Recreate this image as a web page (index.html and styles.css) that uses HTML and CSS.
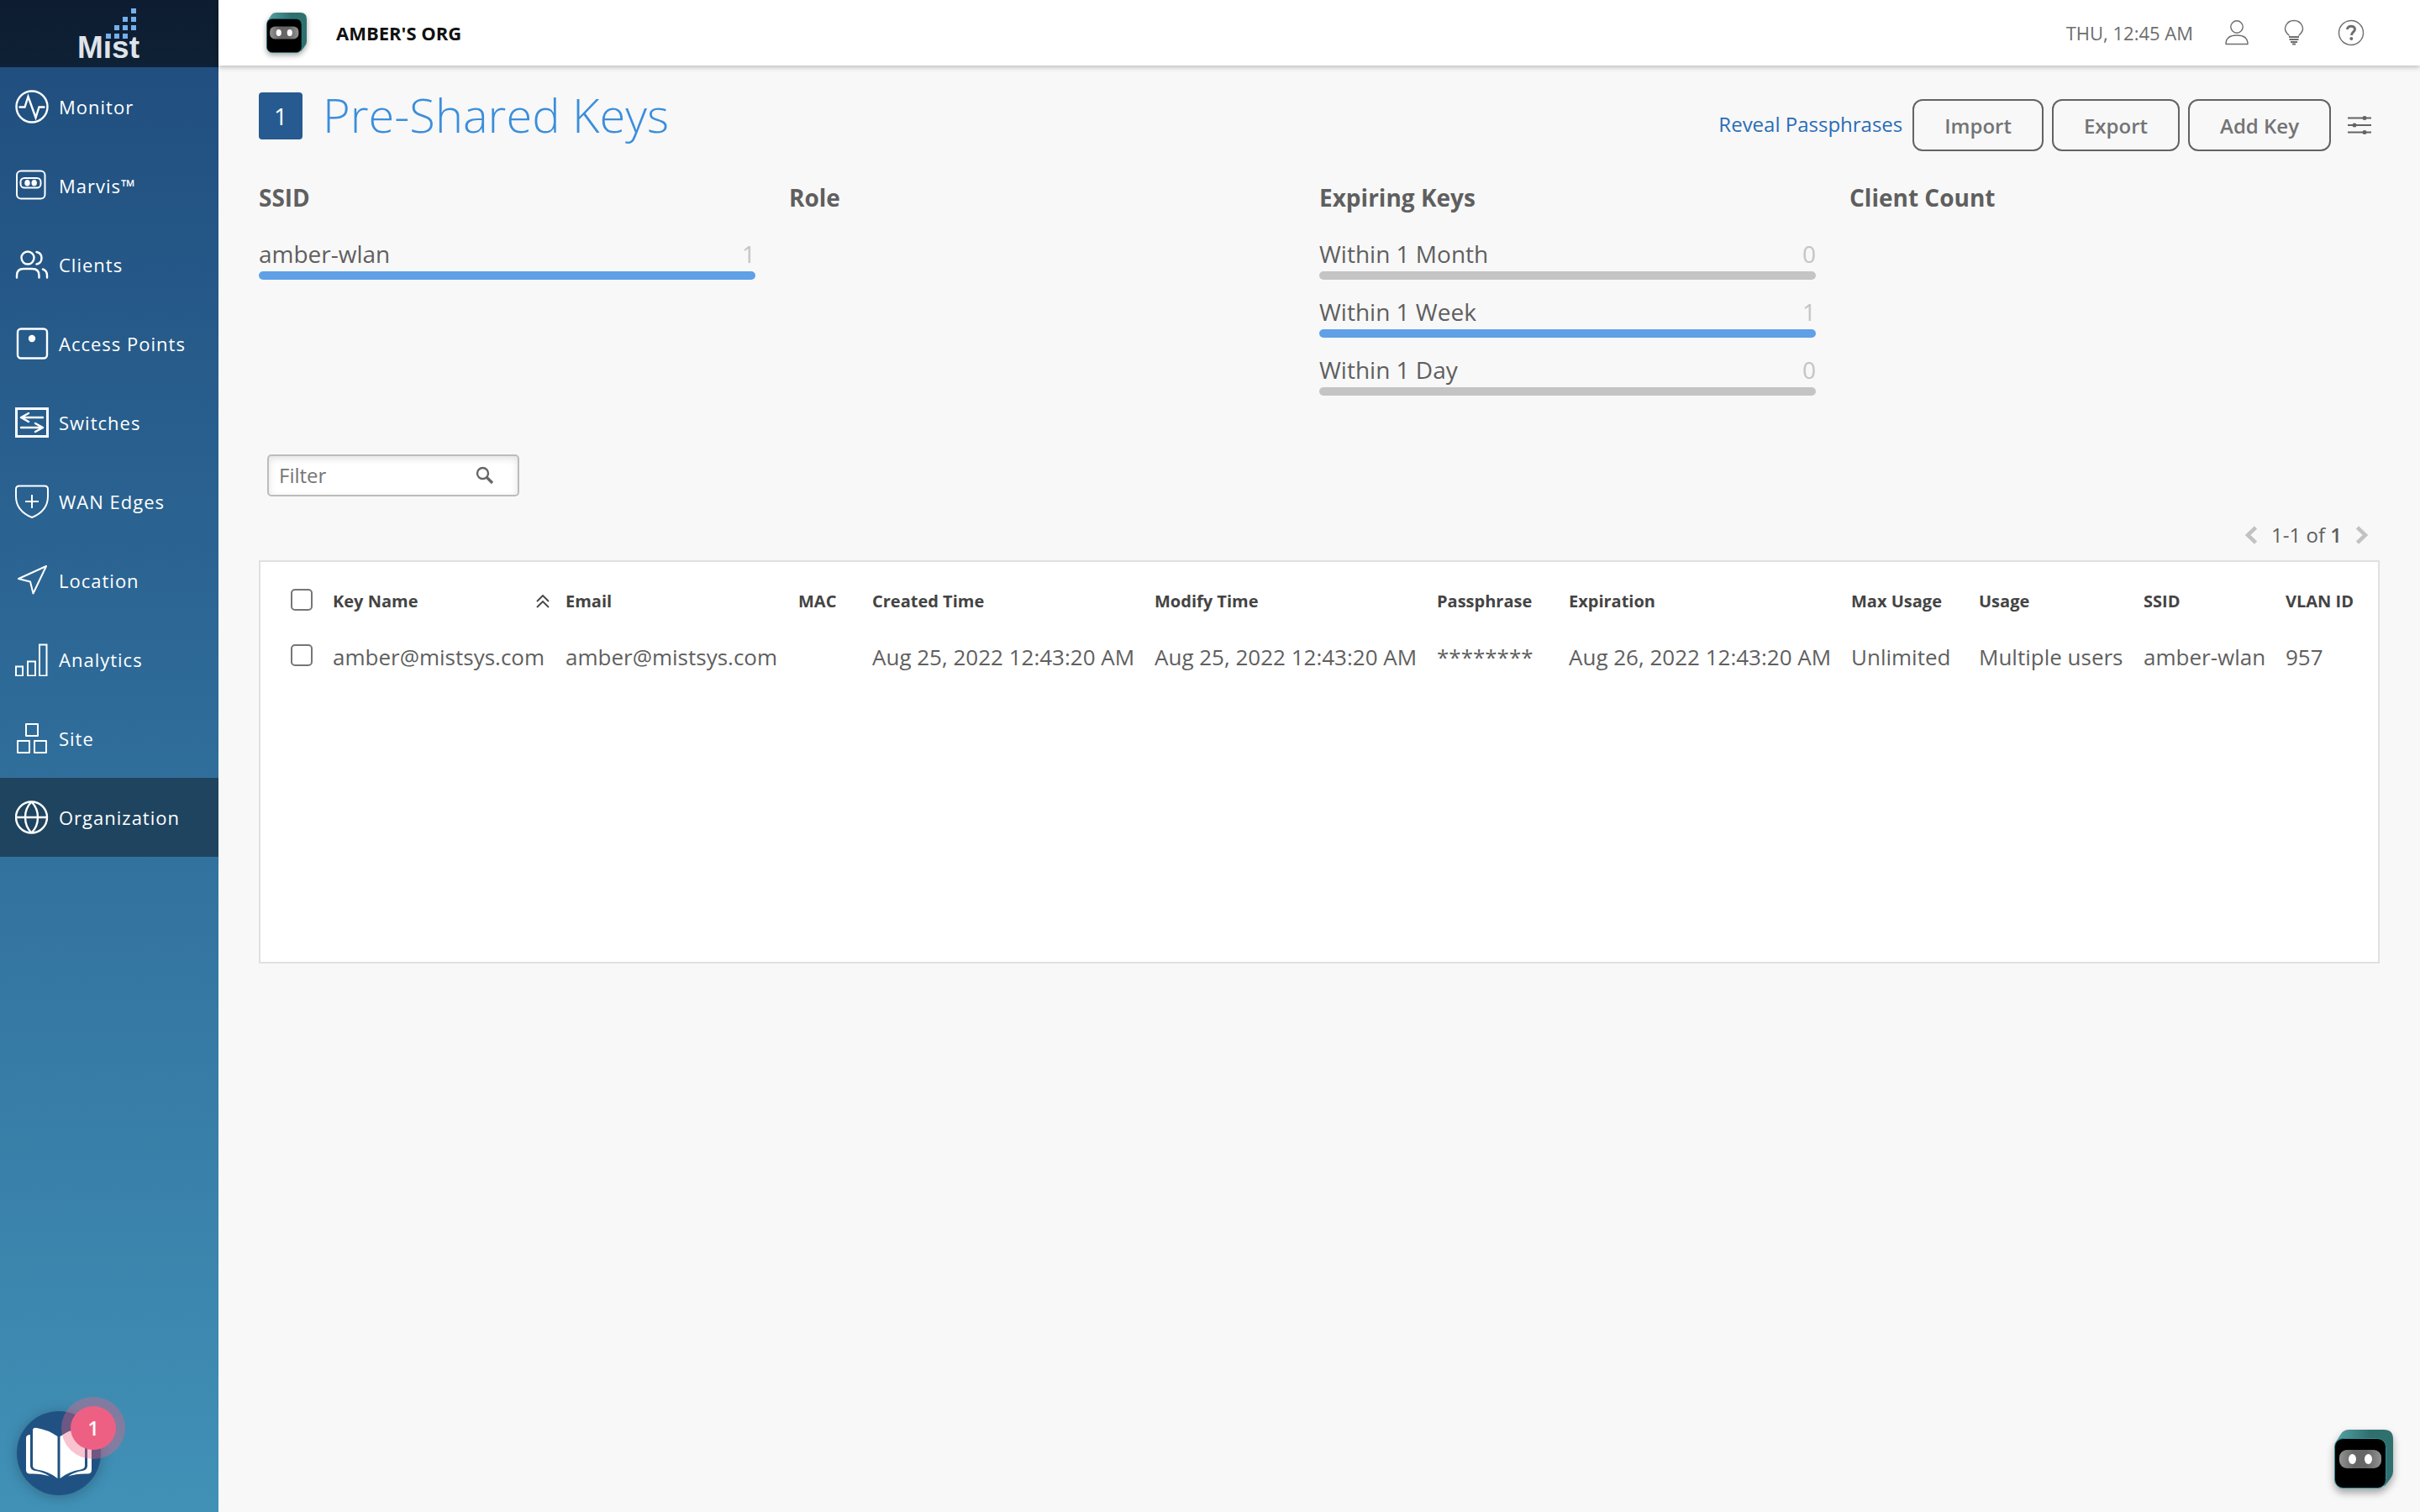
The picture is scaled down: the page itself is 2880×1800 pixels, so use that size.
FILE: index.html
```html
<!DOCTYPE html>
<html lang="en">
<head>
<meta charset="utf-8">
<meta name="viewport" content="width=device-width, initial-scale=1">
<title>Pre-Shared Keys</title>
<link rel="stylesheet" href="styles.css">
</head>
<body>
<svg class="defs" width="0" height="0" aria-hidden="true">
  <defs>
    <linearGradient id="visor"><stop offset="0" stop-color="#929292"/><stop offset=".35" stop-color="#666"/><stop offset=".65" stop-color="#666"/><stop offset="1" stop-color="#929292"/></linearGradient>
    <linearGradient id="cube"><stop offset="0" stop-color="#55a3a8"/><stop offset=".6" stop-color="#2f706e"/><stop offset="1" stop-color="#2f706e"/></linearGradient>
    <symbol id="robot" viewBox="0 0 70 70">
      <path d="M1 16 8 5Q11 0 18 0H59Q70 0 70 11V50Q70 54 67 58L60 67Z" fill="url(#cube)"/>
      <rect x=".5" y="10.500" width="61" height="59" rx="10" fill="#000" stroke="#2f8f99"/>
      <rect x="6" y="24" width="50" height="22" rx="9" fill="url(#visor)"/>
      <ellipse cx="21.500" cy="35" rx="4.500" ry="6" fill="#fff"/>
      <ellipse cx="40.500" cy="35" rx="4.500" ry="6" fill="#fff"/>
    </symbol>
  </defs>
</svg>
<div class="app">
  <aside class="sidebar">
    <a class="logo" href="#" aria-label="Mist">
      <svg width="88" height="80" viewBox="0 0 88 80">
        <text class="logo-text" x="6" y="69">Mist</text>
        <path d="M39 39h10v9h-10z" fill="#0e1f33"/>
        <path d="M70 10h6v6h-6zM60 20h6v6h-6zM70 20h6v6h-6zM50 30h6v6h-6zM60 30h6v6h-6zM70 30h6v6h-6zM40 40h6v6h-6zM50 40h6v6h-6zM60 40h6v6h-6z" fill="#74b0ee"/>
      </svg>
    </a>
    <nav class="nav">
      <a href="#"><svg viewBox="0 0 40 40"><circle cx="20" cy="20" r="18.500"/><path d="M5.500 20.500h6L15.500 8 24.500 33 28.500 20.500h6" stroke-linecap="round"/></svg>Monitor</a>
      <a href="#"><svg viewBox="0 0 40 40"><rect x="2" y="2.500" width="33.500" height="33" rx="5" stroke-width="2"/><rect x="6.500" y="11" width="24" height="11.500" rx="4.500" stroke-width="2"/><ellipse class="solid" cx="14.500" cy="16.700" rx="3.200" ry="3.800"/><ellipse class="solid" cx="22.700" cy="16.700" rx="3.200" ry="3.800"/></svg>Marvis™</a>
      <a href="#"><svg viewBox="0 0 40 40" stroke-linecap="round"><circle cx="15" cy="12" r="7.500"/><path d="M25.500 5c8 1.500 8 13 0 14.500M2 35.500V33c0-5 3-8 8-8h10.500c5 0 8 3 8 8v2.500M33 25.500c3 1 5 4 5 7.500v2.500"/></svg>Clients</a>
      <a href="#"><svg viewBox="0 0 40 40"><rect x="3" y="2.500" width="35" height="35" rx="4"/><circle class="solid" cx="20" cy="14" r="4.200"/></svg>Access Points</a>
      <a href="#"><svg viewBox="0 0 40 40"><path d="M1.500 3.500h37v33h-37z" stroke-width="3"/><path d="M33 14H7M16 9l-9 5 9 5M7 26h26M24 21l9 5-9 5" stroke-linecap="round" stroke-linejoin="round"/></svg>Switches</a>
      <a href="#"><svg viewBox="0 0 40 40"><path d="M5 1.500h30q4 0 4 4V14c0 12-8 20.500-19 25C9 34.500 1 26 1 14V5.500q0-4 4-4ZM20 12v16M12 20h16" stroke-width="2"/></svg>WAN Edges</a>
      <a href="#"><svg viewBox="0 0 40 40"><path d="M37 3 4 18l14 3.500 3.500 14z" stroke-linejoin="round" stroke-width="2"/></svg>Location</a>
      <a href="#"><svg viewBox="0 0 40 40"><path d="M1 28.500h8v11H1zM15 22.500h9v17h-9zM29 2.500h8.500v37H29z" stroke-width="2"/></svg>Analytics</a>
      <a href="#"><svg viewBox="0 0 40 40"><path d="M13 3h14v14H13zM3 23h14v14H3zM23 23h14v14H23z" stroke-width="2" stroke-linejoin="round"/></svg>Site</a>
      <a class="active" href="#"><svg viewBox="0 0 40 40"><circle cx="19.500" cy="20" r="18.500"/><path d="M1 20h37M19.500 1.500c-10 10-10 27 0 37M19.500 1.500c10 10 10 27 0 37"/></svg>Organization</a>
    </nav>
  </aside>
  <div class="content">
    <header class="topbar">
      <svg class="org-icon"><use href="#robot"/></svg>
      <span class="org-name">AMBER'S ORG</span>
      <time class="clock">THU, 12:45 AM</time>
      <button class="icon-btn" aria-label="Account"><svg viewBox="0 0 32 32"><circle cx="16" cy="9" r="7.200"/><path d="M3 29.500c0-7 5-10.500 13-10.500s13 3.500 13 10.500z" stroke-linejoin="round"/></svg></button>
      <button class="icon-btn" aria-label="Tips"><svg viewBox="0 0 32 32"><path d="M10.500 19.500c-10-8-3-18 5.500-18s15.500 10 5.500 18"/><path d="M10 21h12M10.500 24h11M12 27h8M14 29.500h4" stroke-width="1.800"/></svg></button>
      <button class="icon-btn" aria-label="Help"><svg viewBox="0 0 32 32"><circle cx="16" cy="16" r="14.500"/><path d="M11.500 12c0-5 9-5.200 9-.2 0 3.500-4 3.200-4 7.200" stroke-width="3"/><circle cx="16.300" cy="23" r="2" fill="#6e6e6e" stroke="none"/></svg></button>
    </header>
    <main class="main">
      <div class="title-row">
        <span class="count">1</span>
        <h1>Pre-Shared Keys</h1>
        <div class="actions">
          <a href="#">Reveal Passphrases</a>
          <button class="btn">Import</button>
          <button class="btn">Export</button>
          <button class="btn">Add Key</button>
          <button class="settings" aria-label="Table settings"><svg width="28" height="24" viewBox="0 0 28 24"><path d="M0 3.500h28M0 12h28M0 20.500h28" stroke="#636466" stroke-width="2"/><g fill="#636466"><circle cx="20" cy="3.500" r="2.500"/><circle cx="8" cy="12" r="2.500"/><circle cx="20" cy="20.500" r="2.500"/></g></svg></button>
        </div>
      </div>
      <section class="stats">
        <div><h2>SSID</h2>
          <div class="stat on"><span>amber-wlan</span><span class="num">1</span></div>
        </div>
        <div><h2>Role</h2></div>
        <div><h2>Expiring Keys</h2>
          <div class="stat"><span>Within 1 Month</span><span class="num">0</span></div>
          <div class="stat on"><span>Within 1 Week</span><span class="num">1</span></div>
          <div class="stat"><span>Within 1 Day</span><span class="num">0</span></div>
        </div>
        <div><h2>Client Count</h2></div>
      </section>
      <label class="filter">
        <input type="text" placeholder="Filter" aria-label="Filter">
        <svg width="22" height="22" viewBox="0 0 22 22" fill="none" stroke="#666"><circle cx="8.500" cy="8.500" r="6.500" stroke-width="2.400"/><path d="m13 13 7 7" stroke-width="3.200"/></svg>
      </label>
      <div class="pager">
        <button aria-label="Previous page"><svg width="14" height="22" viewBox="0 0 14 22"><path d="M12.500 2 3 11l9.500 9"/></svg></button>
        <span>1-1 of <b>1</b></span>
        <button aria-label="Next page"><svg width="14" height="22" viewBox="0 0 14 22"><path d="M1.500 2 11 11l-9.500 9"/></svg></button>
      </div>
      <div class="panel">
        <table>
          <colgroup><col class="c-check"><col class="c-name"><col class="c-name"><col class="c-mac"><col class="c-time"><col class="c-time"><col class="c-pass"><col class="c-time"><col class="c-max"><col class="c-usage"><col class="c-ssid"><col></colgroup>
          <thead><tr>
            <th><input type="checkbox" aria-label="Select all keys"></th>
            <th><div class="sorted">Key Name<svg width="16" height="16" viewBox="0 0 16 16" fill="none" stroke="#444" stroke-width="1.800"><path d="m1 8 7-7 7 7M1 15l7-7 7 7"/></svg></div></th>
            <th>Email</th><th>MAC</th><th>Created Time</th><th>Modify Time</th><th>Passphrase</th><th>Expiration</th><th>Max Usage</th><th>Usage</th><th>SSID</th><th>VLAN ID</th>
          </tr></thead>
          <tbody><tr>
            <td><input type="checkbox" aria-label="Select amber@mistsys.com"></td>
            <td>amber@mistsys.com</td><td>amber@mistsys.com</td><td></td><td>Aug 25, 2022 12:43:20 AM</td><td>Aug 25, 2022 12:43:20 AM</td><td>********</td><td>Aug 26, 2022 12:43:20 AM</td><td>Unlimited</td><td>Multiple users</td><td>amber-wlan</td><td>957</td>
          </tr></tbody>
        </table>
      </div>
    </main>
  </div>
</div>
<button class="guide" aria-label="Guides">
  <svg width="78" height="62" viewBox="0 0 78 62" fill="#fff"><path d="M8 4Q8 0 13 1 26 3 37.500 11V61Q28 53 13 50.500 8 49.500 8 46ZM70 4Q70 0 65 1 52 3 40.500 11V61Q50 53 65 50.500 70 49.500 70 46Z"/><path d="M5 9Q0 9 0 13V51Q0 55.500 5 55.500 18 55 28 58.500 20 53 11 52 5 51 5 46ZM73 9Q78 9 78 13V51Q78 55.500 73 55.500 60 55 50 58.500 58 53 67 52 73 51 73 46Z"/></svg>
  <span class="badge">1</span>
</button>
<button class="assistant" aria-label="Assistant"><svg><use href="#robot"/></svg></button>
</body>
</html>
```

FILE: styles.css
```css
* { box-sizing: border-box; }
body {
  margin: 0;
  background: #f8f8f8;
  color: #5f5f5f;
  font: 26px/36px "Open Sans", "Noto Sans", sans-serif;
}
a { text-decoration: none; color: inherit; }
button { font: inherit; color: inherit; background: none; border: 0; padding: 0; cursor: pointer; }
svg { display: block; flex: none; }
.defs { position: absolute; }

.app { display: flex; min-height: 100vh; }

.sidebar {
  flex: none;
  width: 260px;
  background: linear-gradient(#1f4c7d, #2c6694 40%, #4191b7);
}
.logo {
  display: flex;
  justify-content: center;
  height: 80px;
  background: linear-gradient(#0e1c31, #0e2135);
}
.logo-text { font: bold 37px "Liberation Sans", sans-serif; fill: #dfe4ea; }
.nav { display: flex; flex-direction: column; }
.nav a {
  display: flex;
  align-items: center;
  gap: 12px;
  height: 94px;
  padding-left: 18px;
  color: #fff;
  font-size: 22px;
  font-weight: 500;
  letter-spacing: 1px;
}
.nav svg { width: 40px; height: 40px; fill: none; stroke: #fff; stroke-width: 2.4; }
.nav .solid { fill: #fff; stroke: none; }
.nav .active { background: #1f445f; }

.content { flex: 1; min-width: 0; }
.topbar {
  display: flex;
  align-items: center;
  height: 78px;
  padding: 0 66px 0 57px;
  background: #fff;
  box-shadow: 0 2px 6px rgba(0, 0, 0, .25);
  font-size: 22px;
}
.org-icon { width: 48px; height: 48px; filter: drop-shadow(0 3px 3px rgba(0, 0, 0, .35)); }
.org-name { margin-left: 35px; color: #111; font-weight: 700; }
.clock { margin-left: auto; margin-right: 36px; color: #6e6e6e; }
.icon-btn + .icon-btn { margin-left: 36px; }
.icon-btn svg { width: 32px; height: 32px; fill: none; stroke: #6e6e6e; stroke-width: 1.4; }

.main { padding: 32px 48px 48px; }
.title-row { display: flex; align-items: center; height: 78px; }
.title-row .count {
  width: 52px;
  height: 56px;
  margin-bottom: 22px;
  border-radius: 4px;
  background: #265a90;
  color: #fff;
  font-size: 28px;
  line-height: 56px;
  text-align: center;
}
h1 { margin: 0 0 26px 24px; color: #3b8edc; font-size: 56px; line-height: 56px; font-weight: 300; }
.actions { display: flex; align-items: center; gap: 10px; margin-left: auto; color: #737476; font-size: 24px; }
.actions a { color: #2a6db6; margin-right: 2px; padding-bottom: 2px; }
.btn { height: 62px; padding: 2px 36px 0; border: 2px solid #636363; border-radius: 12px; font-weight: 600; }
.settings { margin: 0 10px; }

.stats { display: grid; grid-template-columns: repeat(4, 1fr); min-height: 353px; padding-top: 29px; }
.stats > div { padding-right: 40px; }
h2 { margin: 0 0 31px; font-size: 28px; line-height: 36px; font-weight: 700; }
.stat { display: flex; justify-content: space-between; flex-wrap: wrap; font-size: 28px; line-height: 36px; margin-bottom: 20px; }
.stat::after { content: ""; width: 100%; height: 10px; margin-top: 3px; border-radius: 5px; background: #c4c4c4; }
.stat.on::after { background: #5fa0e6; }
.stat .num { color: #c4c4c4; }

.filter {
  display: flex;
  align-items: center;
  width: 300px;
  height: 50px;
  margin-left: 10px;
  padding: 0 28px 0 12px;
  border: 2px solid #bcbcbc;
  border-radius: 5px;
  background: #fff;
  box-shadow: inset 0 3px 8px rgba(0, 0, 0, .12);
}
.filter input { flex: 1; min-width: 0; padding: 0; border: 0; outline: 0; background: none; color: #5f5f5f; font: inherit; font-size: 24px; }
.filter input::placeholder { color: #757575; opacity: 1; }

.pager { display: flex; align-items: center; justify-content: flex-end; gap: 17px; margin-top: 28px; padding-right: 14px; font-size: 24px; }
.pager svg { fill: none; stroke: #c2c2c2; stroke-width: 4.5; }
.pager b { font-weight: 600; }

.panel { min-height: 480px; margin-top: 12px; padding: 14px 0 0 36px; border: 2px solid #e0e0e0; background: #fff; overflow: hidden; }
table { width: 100%; table-layout: fixed; border-collapse: collapse; }
th, td { height: 66px; padding: 0; text-align: left; white-space: nowrap; }
th { color: #444; font-size: 20px; font-weight: 700; }
.c-check { width: 50px; }
.c-name { width: 277px; }
.c-mac { width: 88px; }
.c-time { width: 336px; }
.c-pass { width: 157px; }
.c-max { width: 152px; }
.c-usage { width: 196px; }
.c-ssid { width: 169px; }
.sorted { display: flex; align-items: center; justify-content: space-between; padding-right: 19px; }
input[type="checkbox"] {
  appearance: none;
  display: block;
  width: 26px;
  height: 26px;
  margin: 0 0 4px;
  border: 2px solid #767676;
  border-radius: 5px;
  background: #fff;
}

.guide {
  position: fixed;
  left: 20px;
  bottom: 20px;
  display: grid;
  place-items: center;
  width: 100px;
  height: 100px;
  border-radius: 50%;
  background: #1f5282;
  box-shadow: 0 2px 16px rgba(0, 0, 0, .25);
}
.badge {
  position: absolute;
  top: -6px;
  right: -18px;
  width: 54px;
  height: 52px;
  border-radius: 50%;
  background: #ee6083;
  box-shadow: 0 0 0 11px rgba(238, 96, 131, .38);
  color: #fff;
  font-size: 24px;
  font-weight: 600;
  line-height: 52px;
}
.assistant { position: fixed; right: 32px; bottom: 28px; }
.assistant svg { width: 70px; height: 70px; filter: drop-shadow(0 5px 5px rgba(0, 0, 0, .35)); }
```
